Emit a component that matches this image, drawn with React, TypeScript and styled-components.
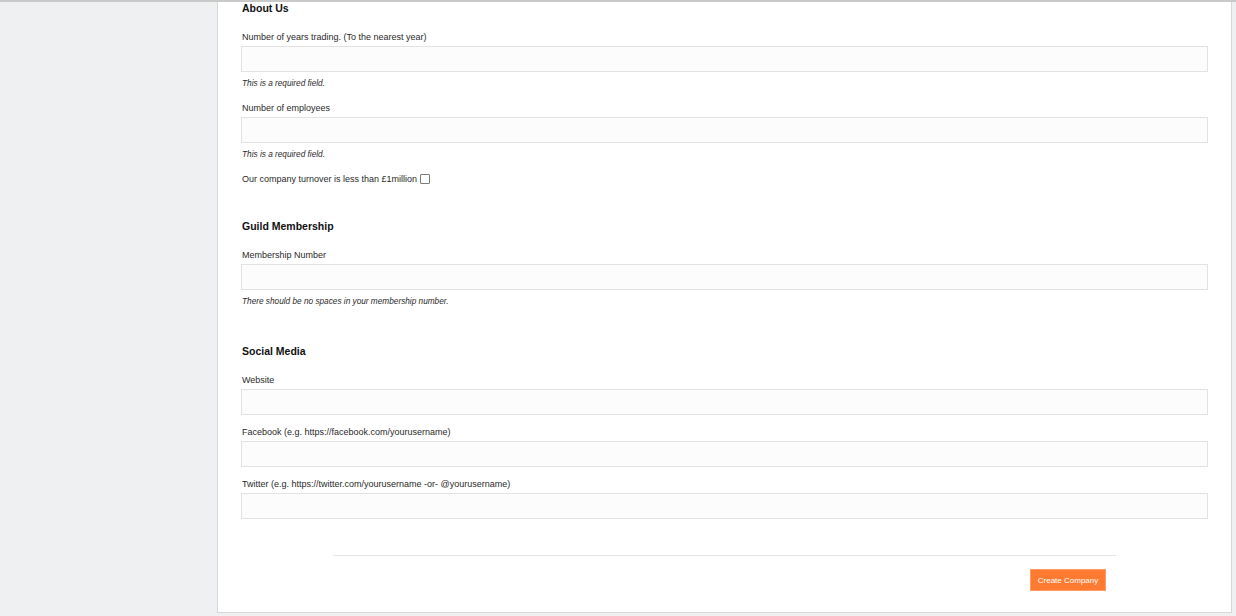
import React from 'react'
import styled, { createGlobalStyle } from 'styled-components';

const GlobalStyle = createGlobalStyle`
  html, body {
    margin: 0;
    padding: 0;
    background: #eff0f1;
    font-family: "Liberation Sans", Arial, sans-serif;
    color: #222;
  }
  * { box-sizing: border-box; }
`;

interface FieldProps {
  label: string;
  help?: string;
}

const Field = ({ label, help }: FieldProps) => {
  return (
    <FieldStyle>
      <label>{label}</label>
      <input type='text' />
      {help && <p className='help'>{help}</p>}
    </FieldStyle>
  )
}

const App = () => {
  return (
    <>
      <GlobalStyle />
      <Page>
        <TopRule />
        <Layout>
          <Sidebar />
          <Panel>
            <Section>
              <h3>About Us</h3>
              <Field label='Number of years trading. (To the nearest year)' help='This is a required field.' />
              <Field label='Number of employees' help='This is a required field.' />
              <CheckRow>
                <span>Our company turnover is less than £1million</span>
                <input type='checkbox' />
              </CheckRow>
            </Section>

            <Section>
              <h3>Guild Membership</h3>
              <Field label='Membership Number' help='There should be no spaces in your membership number.' />
            </Section>

            <Section>
              <h3>Social Media</h3>
              <Field label='Website' />
              <Field label='Facebook (e.g. https://facebook.com/yourusername)' />
              <Field label='Twitter (e.g. https://twitter.com/yourusername -or- @yourusername)' />
            </Section>

            <Footer>
              <SubmitButton type='button'>Create Company</SubmitButton>
            </Footer>
          </Panel>
        </Layout>
      </Page>
    </>
  )
}

const Page = styled.div`
  width: 1236px;
  height: 616px;
  overflow: hidden;
  display: flex;
  flex-direction: column;
`;

const TopRule = styled.div`
  height: 2px;
  background: #c9c9c9;
  flex-shrink: 0;
`;

const Layout = styled.div`
  display: flex;
  align-items: flex-start;
`;

const Sidebar = styled.div`
  width: 217px;
  flex-shrink: 0;
`;

const Panel = styled.main`
  width: 1015px;
  display: flex;
  flex-direction: column;
  background: #fff;
  border: 1px solid #d8d8d8;
  border-top: none;
  padding: 0 23px 21px 23px;
`;

const Section = styled.section`
  display: flex;
  flex-direction: column;
  margin-bottom: 36px;

  h3 {
    font-size: 10.5px;
    line-height: 12px;
    font-weight: 700;
    margin: 0 0 18px 1px;
    color: #111;
  }
`;

const FieldStyle = styled.div`
  display: flex;
  flex-direction: column;
  margin-bottom: 12px;

  &:last-child {
    margin-bottom: 0;
  }

  label {
    display: block;
    font-size: 9px;
    line-height: 11px;
    margin: 0 0 3px 1px;
    color: #2a2a2a;
  }

  input {
    display: block;
    width: 100%;
    height: 26px;
    border: 1px solid #e2e2e2;
    background: #fcfcfc;
    padding: 0 6px;
    font: inherit;
    outline: none;
  }

  .help {
    font-size: 8.25px;
    line-height: 10px;
    font-style: italic;
    margin: 7px 0 2px 1px;
    color: #2a2a2a;
  }
`;

const CheckRow = styled.label`
  display: flex;
  align-items: center;
  gap: 3px;
  margin-left: 1px;
  font-size: 9px;
  line-height: 10px;
  color: #2a2a2a;

  input {
    appearance: none;
    -webkit-appearance: none;
    width: 10px;
    height: 10px;
    margin: 0;
    border: 1px solid #7a7a7a;
    border-radius: 1px;
    background: #fff;
  }
`;

const Footer = styled.div`
  width: 783px;
  align-self: center;
  border-top: 1px solid #e4e4e4;
  padding: 13px 10px 0 0;
  display: flex;
  justify-content: flex-end;
`;

const SubmitButton = styled.button`
  height: 22px;
  width: 76px;
  padding: 0;
  border: 1px solid #ff9a63;
  background: #ff7a31;
  color: #fff;
  font-family: "Liberation Sans", Arial, sans-serif;
  font-size: 8px;
  cursor: pointer;
`;

export default App
